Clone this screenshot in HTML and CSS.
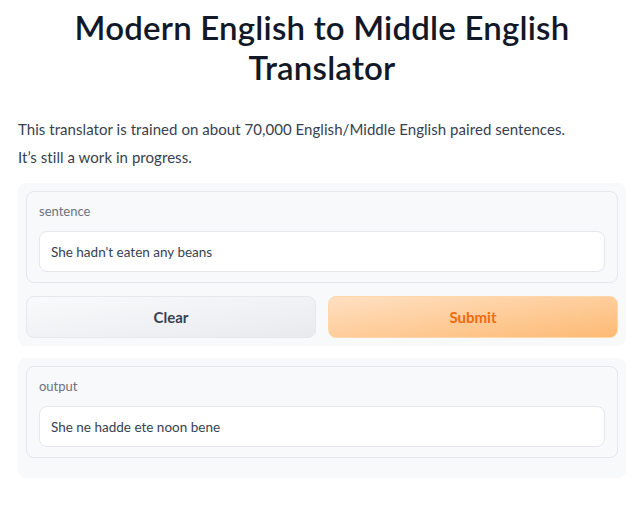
FILE: index.html
```html
<!DOCTYPE html>
<html lang="en">
<head>
<meta charset="utf-8">
<title>Modern English to Middle English Translator</title>
<link rel="stylesheet" href="styles.css">
</head>
<body>
<main class="app">
  <h1 class="title">Modern English to Middle English Translator</h1>
  <div class="desc">
    <p>This translator is trained on about 70,000 English/Middle English paired sentences.</p>
    <p>It’s still a work in progress.</p>
  </div>
  <section class="panel">
    <div class="block">
      <label class="label" for="sentence">sentence</label>
      <div class="field" id="sentence">She hadn't eaten any beans</div>
    </div>
    <div class="buttons">
      <button class="btn btn-secondary">Clear</button>
      <button class="btn btn-primary">Submit</button>
    </div>
  </section>
  <section class="panel panel-output">
    <div class="block">
      <div class="label">output</div>
      <div class="field">She ne hadde ete noon bene</div>
    </div>
  </section>
</main>
</body>
</html>
```
FILE: styles.css
```css
* { box-sizing: border-box; }
html, body { margin: 0; padding: 0; background: #ffffff; }
body {
  font-family: Lato, "Open Sans", sans-serif;
  color: #374151;
}
.app {
  padding: 7px 17px 0 18px;
  display: flex;
  flex-direction: column;
}
.title {
  margin: 0;
  text-align: center;
  font-size: 33px;
  line-height: 40px;
  font-weight: 600;
  letter-spacing: 0.2px;
  color: #111827;
  padding: 0 40px;
}
.desc {
  margin-top: 28px;
  font-size: 15px;
  line-height: 28px;
  letter-spacing: 0.05px;
  color: #374151;
}
.desc p { margin: 0; }
.panel {
  margin-top: 12px;
  background: #f8f9fb;
  border-radius: 8px;
  padding: 8px;
  display: flex;
  flex-direction: column;
  gap: 13px;
}
.panel-output {
  padding-bottom: 20px;
}
.block {
  border: 1px solid #e5e7eb;
  border-radius: 8px;
  background: #f8f9fb;
  padding: 9px 12px 10px;
  display: flex;
  flex-direction: column;
  gap: 10px;
}
.label {
  font-size: 13px;
  line-height: 20px;
  color: #6b7280;
}
.field {
  height: 41px;
  background: #ffffff;
  border: 1px solid #e5e7eb;
  border-radius: 8px;
  padding: 0 11px;
  display: flex;
  align-items: center;
  font-size: 13.5px;
  color: #374151;
}
.buttons {
  display: grid;
  grid-template-columns: 1fr 1fr;
  gap: 12px;
}
.btn {
  height: 42px;
  border-radius: 8px;
  font-family: inherit;
  font-size: 15px;
  font-weight: 700;
  cursor: pointer;
}
.btn-secondary {
  border: 1px solid #e5e7eb;
  background: linear-gradient(to bottom right, #f9fafb, #e8eaee);
  color: #374151;
}
.btn-primary {
  border: 1px solid #fed7aa;
  background: linear-gradient(to bottom right, #ffe0c2, #fdba74);
  color: #f06a0c;
}
```
